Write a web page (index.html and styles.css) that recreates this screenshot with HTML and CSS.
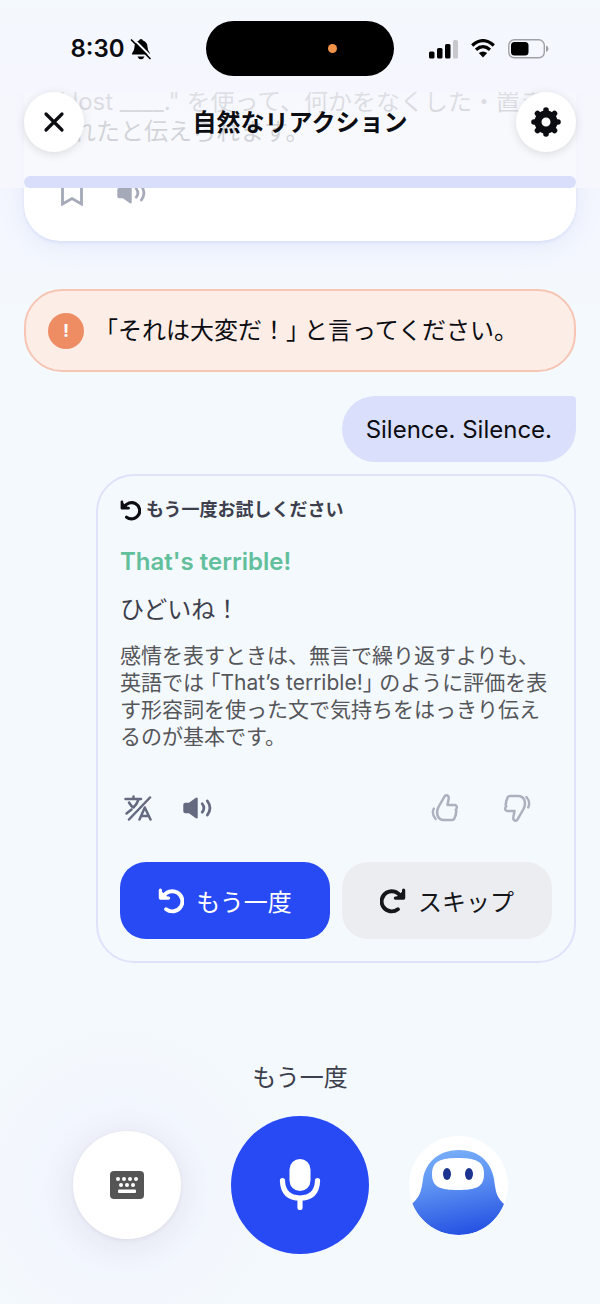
FILE: index.html
```html
<!DOCTYPE html>
<html lang="ja">
<head>
  <meta charset="UTF-8" />
  <meta name="viewport" content="width=device-width, initial-scale=1.0"/>
  <title>自然なリアクション</title>
  <link rel="stylesheet" href="styles.css">
</head>
<body>

  <!-- shared icons -->
  <svg class="sprite" aria-hidden="true">
    <symbol id="undo" viewBox="0 0 24 24">
      <path d="M4.800 8.300A9.300 9.300 0 1 1 7.500 19.600" fill="none" stroke="currentColor" stroke-width="3.600" stroke-linecap="round" />
      <path d="M2.200 2V9.300H9.800z" fill="currentColor" />
      <path d="M2.200 2V9.300H9.800" fill="none" stroke="currentColor" stroke-width="3" stroke-linejoin="round" stroke-linecap="round" />
    </symbol>
    <symbol id="speaker" viewBox="0 0 32 24">
      <path d="M2.500 7.500h4.500L14.500 2v20L7 16.500H2.500Q1.500 16.500 1.500 15.500v-7Q1.500 7.500 2.500 7.500z" fill="currentColor" stroke="currentColor" stroke-width="2.400" stroke-linejoin="round" />
      <path d="M20.500 7.500q3.500 4.500 0 9M26 4.500q5.500 7.500 0 15" fill="none" stroke="currentColor" stroke-width="2.900" stroke-linecap="round" />
    </symbol>
    <symbol id="thumb" viewBox="0 0 28 30">
      <path d="M7.500 14L13.300 3.800Q15 1.200 17 3Q18.200 4.200 17.600 6.200L16.500 12H23.500Q26 12.200 25.800 14.500Q25.700 16 24.700 16.700Q26 19 24.700 20.300Q25.300 22.500 23.900 23.400Q24 27 20.500 27H13Q8 27 6.500 22.500Q5.300 18 7.500 14z" fill="none" stroke="currentColor" stroke-width="2.500" stroke-linejoin="round" />
      <path d="M2.800 15.500Q.2 21 4.600 26" fill="none" stroke="currentColor" stroke-width="2.400" stroke-linecap="round" />
    </symbol>
  </svg>

  <div class="screen">

    <header class="topbar">
      <div class="status">
        <div class="status-left">
          <span class="time">8:30</span>
          <svg width="22" height="22" viewBox="0 0 22 22">
            <path d="M11 1Q12.500 1 13 2.500Q17.500 4 17.500 9Q17.500 12.500 20 15.500V16.500H2V15.500Q4.500 12.500 4.500 9Q4.500 4 9 2.500Q9.500 1 11 1z" />
            <path d="M7.500 18.500h7Q13.500 21.300 11 21.300T7.500 18.500z" />
            <path d="M2.500 0L22 19.500" stroke="#f5f8fd" stroke-width="2" />
            <path d="M1.500 2L20 20.500" stroke="#000" stroke-width="1.700" stroke-linecap="round" />
          </svg>
        </div>
        <div class="island"><span class="rec-dot"></span></div>
        <div class="status-right">
          <svg width="29" height="20" viewBox="0 0 29 20">
            <rect x="0" y="12.500" width="5.500" height="7" rx="1.500" />
            <rect x="8" y="9" width="5.500" height="10.500" rx="1.500" />
            <rect x="16" y="5" width="5.500" height="14.500" rx="1.500" />
            <rect x="24" y="1" width="5" height="18.500" rx="1.500" fill="#c7c8cc" />
          </svg>
          <svg width="26" height="19" viewBox="0 0 26 19">
            <path d="M2.200 6.500Q13-3.200 23.800 6.500" fill="none" stroke="#000" stroke-width="3.200" />
            <path d="M6 10.700Q13 4.700 20 10.700" fill="none" stroke="#000" stroke-width="3.200" />
            <path d="M8.800 14Q13 10.800 17.200 14L13 18.500z" />
          </svg>
          <svg width="41" height="20" viewBox="0 0 41 20">
            <rect x=".8" y=".8" width="35.500" height="18" rx="5.500" fill="none" stroke="#a0a1a5" stroke-width="1.400" />
            <rect x="3" y="3" width="17.500" height="13.600" rx="3.500" />
            <path d="M38 6.500q2.500 1 2.500 3.300T38 13z" fill="#a0a1a5" />
          </svg>
        </div>
      </div>

      <div class="nav">
        <button class="round-btn" aria-label="閉じる">
          <svg width="22" height="22" viewBox="0 0 22 22"><path d="M3 3l16 16M19 3L3 19" stroke="currentColor" stroke-width="3.200" stroke-linecap="round" /></svg>
        </button>
        <h1>自然なリアクション</h1>
        <button class="round-btn" aria-label="設定">
          <svg width="30" height="30" viewBox="-15 -15 30 30">
            <circle r="8" fill="none" stroke="currentColor" stroke-width="7" />
            <path d="M0-12V-11M0 11V12M-12 0H-11M11 0H12M-8.500-8.500l.7.700M8.500 8.500l-.7-.7M8.500-8.500l-.7.700M-8.500 8.500l.7-.7" stroke="currentColor" stroke-width="5.600" stroke-linecap="round" />
          </svg>
        </button>
      </div>

      <div class="progress" role="progressbar" aria-label="進捗" aria-valuenow="0" aria-valuemin="0" aria-valuemax="100"></div>
    </header>

    <main class="chat">
      <!-- scrolled under the top bar -->
      <section class="prompt">
        <p>"I lost ____." を使って、何かをなくした・置き忘れたと伝えられます。</p>
        <div class="prompt-tools">
          <button class="icon-btn" aria-label="保存">
            <svg width="24" height="26" viewBox="0 0 24 26"><path d="M2.500 1.500h19V24L12 18.500L2.500 24z" fill="none" stroke="currentColor" stroke-width="2.800" /></svg>
          </button>
          <button class="icon-btn" aria-label="再生"><svg width="30" height="24"><use href="#speaker" /></svg></button>
        </div>
      </section>

      <section class="alert">
        <span class="alert-mark">!</span>
        <p><span class="open">「</span>それは大変だ！<span class="close">」</span>と言ってください。</p>
      </section>

      <p class="bubble">Silence. Silence.</p>

      <section class="feedback">
        <h2><svg width="21" height="21"><use href="#undo" /></svg>もう一度お試しください</h2>
        <p class="answer" lang="en">That's terrible!</p>
        <p class="meaning">ひどいね！</p>
        <p class="note">感情を表すときは、無言で繰り返すよりも、英語では<span class="open">「</span>That’s terrible!<span class="close">」</span>のように評価を表す形容詞を使った文で気持ちをはっきり伝えるのが基本です。</p>

        <div class="tools">
          <button class="icon-btn" aria-label="翻訳">
            <svg width="28" height="26" viewBox="0 0 28 26" fill="none" stroke="currentColor" stroke-width="2.500" stroke-linecap="round">
              <path d="M1.500 4H17M9.500 1.500V4M14.500 4.500Q13 9 9.500 12.500M5 7.500Q6.500 10 8.500 12M2.500 18.500L7.500 14.500" />
              <path d="M15.500 24.500L20.800 12.500L26.500 24.500M17.500 21H24.500" stroke-linejoin="round" />
              <path d="M24.500 2L4.500 24.500" stroke="#f4f9fd" stroke-width="5" />
              <path d="M26 2.500L5 24.500" />
            </svg>
          </button>
          <button class="icon-btn" aria-label="再生"><svg width="30" height="24"><use href="#speaker" /></svg></button>
          <div class="votes">
            <button class="icon-btn" aria-label="良い"><svg width="28" height="30"><use href="#thumb" /></svg></button>
            <button class="icon-btn" aria-label="悪い"><svg class="flip" width="28" height="30"><use href="#thumb" /></svg></button>
          </div>
        </div>

        <div class="actions">
          <button class="btn btn-primary"><svg width="26" height="26"><use href="#undo" /></svg>もう一度</button>
          <button class="btn btn-skip"><svg class="mirror" width="26" height="26"><use href="#undo" /></svg>スキップ</button>
        </div>
      </section>
    </main>

    <footer class="controls">
      <p>もう一度</p>
      <div class="controls-row">
        <button class="keyboard-btn" aria-label="キーボード">
          <svg width="34" height="28" viewBox="0 0 34 28">
            <rect width="34" height="28" rx="4" fill="#555" />
            <g fill="#fff">
              <circle cx="8" cy="8" r="2" /><circle cx="14" cy="8" r="2" /><circle cx="20" cy="8" r="2" /><circle cx="26" cy="8" r="2" />
              <circle cx="11" cy="14" r="2" /><circle cx="17" cy="14" r="2" /><circle cx="23" cy="14" r="2" />
              <rect x="8" y="18.500" width="18" height="3.500" rx="1" />
            </g>
          </svg>
        </button>
        <button class="mic-btn" aria-label="話す">
          <svg width="42" height="52" viewBox="0 0 42 52">
            <rect x="10.500" y="0" width="21" height="32" rx="10.500" fill="#fff" />
            <path d="M3.500 21.500v1Q4.500 39 21 39T38.500 22.500v-1M21 39V48.500" fill="none" stroke="#fff" stroke-width="5.200" stroke-linecap="round" />
          </svg>
        </button>
        <button class="avatar-btn" aria-label="アシスタント">
          <svg width="99" height="99" viewBox="0 0 99 99">
            <defs>
              <linearGradient id="hood" x1=".4" y1="0" x2=".6" y2="1">
                <stop offset="0" stop-color="#77adf7" />
                <stop offset=".35" stop-color="#6095f3" />
                <stop offset="1" stop-color="#2450e2" />
              </linearGradient>
            </defs>
            <path d="M50 14C69 14 82 25 85 43C87 58 88 61 95 68C87 87 71 99 50 99S12 87 3 68C10 61 12 58 14 43C17 25 31 14 50 14z" fill="url(#hood)" />
            <path d="M49 22C66 22 75 25 75 38S67 54 49 54S23 51 23 38S32 22 49 22z" fill="#fff" />
            <ellipse cx="38" cy="38" rx="4" ry="6" fill="#1d3390" />
            <ellipse cx="60" cy="38" rx="4" ry="6" fill="#1d3390" />
          </svg>
        </button>
      </div>
    </footer>

  </div>

</body>
</html>
```
FILE: styles.css
```css
* {
  box-sizing: border-box;
}

body {
  margin: 0;
  font-family: Inter, "Noto Sans CJK JP", sans-serif;
  color: #0c0d12;
  background: #f4f9fd;
}

h1, h2, p {
  margin: 0;
}

button {
  display: flex;
  align-items: center;
  justify-content: center;
  padding: 0;
  border: none;
  background: none;
  font-family: inherit;
  color: inherit;
  cursor: pointer;
}

svg {
  display: block;
  flex: none;
}

.sprite {
  position: absolute;
  width: 0;
  height: 0;
}

.screen {
  position: relative;
  display: flex;
  flex-direction: column;
  min-height: 100vh;
  background:
    radial-gradient(circle at 20% 91%, #f0f2fd 0, rgba(240, 242, 253, 0) 160px),
    linear-gradient(#f4f9fd 0, #f5f6fe 80px, #f4f7fe 220px, #f4f9fd 320px);
}

/* top bar, lies over the scrolled chat */
.topbar {
  position: absolute;
  top: 0;
  left: 0;
  right: 0;
  z-index: 2;
  padding: 21px 24px 0;
  background: linear-gradient(#f4f9fd 0, #f5f6fe 80px, #f5f6fe 92px, rgba(246, 247, 253, 0.9) 92px, rgba(246, 248, 253, 0.84) 130px, rgba(246, 248, 253, 0.84) 100%);
}

.status {
  display: grid;
  grid-template-columns: 1fr 188px 1fr;
  align-items: center;
  height: 55px;
  margin: 0 -8px;
}

.status-left, .status-right {
  display: flex;
  align-items: center;
  justify-content: center;
}

.status-left {
  gap: 5px;
}

.status-right {
  gap: 12px;
}

.time {
  font-size: 24px;
  font-weight: 600;
}

.island {
  display: flex;
  align-items: center;
  justify-content: flex-end;
  height: 55px;
  padding-right: 57px;
  border-radius: 28px;
  background: #000;
}

.rec-dot {
  width: 9px;
  height: 9px;
  border-radius: 50%;
  background: #f09349;
}

.nav {
  display: flex;
  align-items: center;
  justify-content: space-between;
  margin-top: 16px;
}

.nav h1 {
  padding-top: 2px;
  font-size: 24px;
  line-height: 36px;
  font-weight: 600;
}

.round-btn {
  width: 60px;
  height: 60px;
  border-radius: 50%;
  background: #fff;
  box-shadow: 0 2px 10px rgba(0, 0, 0, 0.12);
}

.progress {
  height: 12px;
  margin-top: 24px;
  border-radius: 6px;
  background: #d9dffb;
}

/* chat */
.chat {
  display: flex;
  flex-direction: column;
  padding: 63px 24px 0;
}

.prompt {
  padding: 24px 24px 30px;
  border-radius: 36px;
  background: #fff;
  box-shadow: 0 2px 3px rgba(90, 110, 200, 0.1), 0 4px 28px rgba(110, 120, 230, 0.12);
}

.prompt p {
  font-size: 24px;
  line-height: 30px;
}

.prompt-tools {
  display: flex;
  gap: 24px;
  margin-top: 28px;
  padding-left: 6px;
  color: #a5a9b8;
}

.icon-btn {
  width: 36px;
  height: 36px;
}

.alert {
  display: flex;
  align-items: center;
  gap: 16px;
  min-height: 83px;
  margin-top: 48px;
  padding: 12px 22px;
  border: 2px solid #f6c5b3;
  border-radius: 38px;
  background: #fceee7;
}

.alert-mark {
  width: 36px;
  height: 36px;
  border-radius: 50%;
  background: #ee8c64;
  color: #fff;
  font-size: 18px;
  font-weight: 700;
  line-height: 36px;
  text-align: center;
}

.alert p {
  font-size: 24px;
  line-height: 36px;
}

/* half-width corner brackets */
.open, .close {
  font-feature-settings: "halt";
}

.open {
  margin-left: 6px;
}

.close {
  margin-right: 6px;
}

.bubble {
  align-self: flex-end;
  margin-top: 24px;
  padding: 17px 24px 15px;
  border-radius: 33px 4px 33px 33px;
  background: #dae0fb;
  font-size: 24px;
  line-height: 34px;
}

.feedback {
  margin: 12px 0 0 72px;
  padding: 20px 22px 22px;
  border: 2px solid #e0e2fb;
  border-radius: 38px;
}

.feedback h2 {
  display: flex;
  align-items: center;
  gap: 5px;
  font-size: 18px;
  line-height: 28px;
  font-weight: 600;
  color: #3d3f4d;
}

.feedback h2 svg {
  color: #0c0d12;
}

.answer {
  margin-top: 22px;
  font-size: 24px;
  line-height: 32px;
  font-weight: 600;
  color: #62bf9b;
}

.meaning {
  margin-top: 16px;
  font-size: 24px;
  line-height: 32px;
  color: #3d3f4d;
}

.note {
  margin-top: 16px;
  font-size: 21px;
  line-height: 27px;
  color: #55565a;
}

.tools {
  display: flex;
  gap: 24px;
  margin-top: 40px;
  color: #656a80;
}

.votes {
  display: flex;
  gap: 36px;
  margin-left: auto;
  padding-right: 17px;
  color: #adb1be;
}

.flip {
  transform: rotate(180deg);
}

.mirror {
  transform: scaleX(-1);
}

.actions {
  display: grid;
  grid-template-columns: 1fr 1fr;
  gap: 12px;
  margin-top: 36px;
}

.btn {
  gap: 12px;
  height: 77px;
  border-radius: 26px;
  font-size: 24px;
}

.btn-primary {
  background: #284af5;
  color: #fff;
}

.btn-skip {
  background: #ecedf1;
  color: #15161a;
}

/* bottom controls */
.controls {
  margin-top: auto;
  padding: 40px 24px 50px;
}

.controls p {
  font-size: 24px;
  line-height: 36px;
  text-align: center;
  color: #3d3f4d;
}

.controls-row {
  display: grid;
  grid-template-columns: 1fr auto 1fr;
  align-items: center;
  gap: 40px;
  margin-top: 20px;
}

.keyboard-btn {
  justify-self: end;
  width: 108px;
  height: 108px;
  margin-right: 10px;
  border-radius: 50%;
  background: #fff;
  box-shadow: 0 1px 4px rgba(0, 0, 0, 0.06), 0 6px 36px rgba(40, 40, 70, 0.08);
}

.mic-btn {
  width: 138px;
  height: 138px;
  border-radius: 50%;
  background: #284af5;
}

.avatar-btn {
  width: 99px;
  height: 99px;
  border-radius: 50%;
  background: #fff;
  overflow: hidden;
}
```
